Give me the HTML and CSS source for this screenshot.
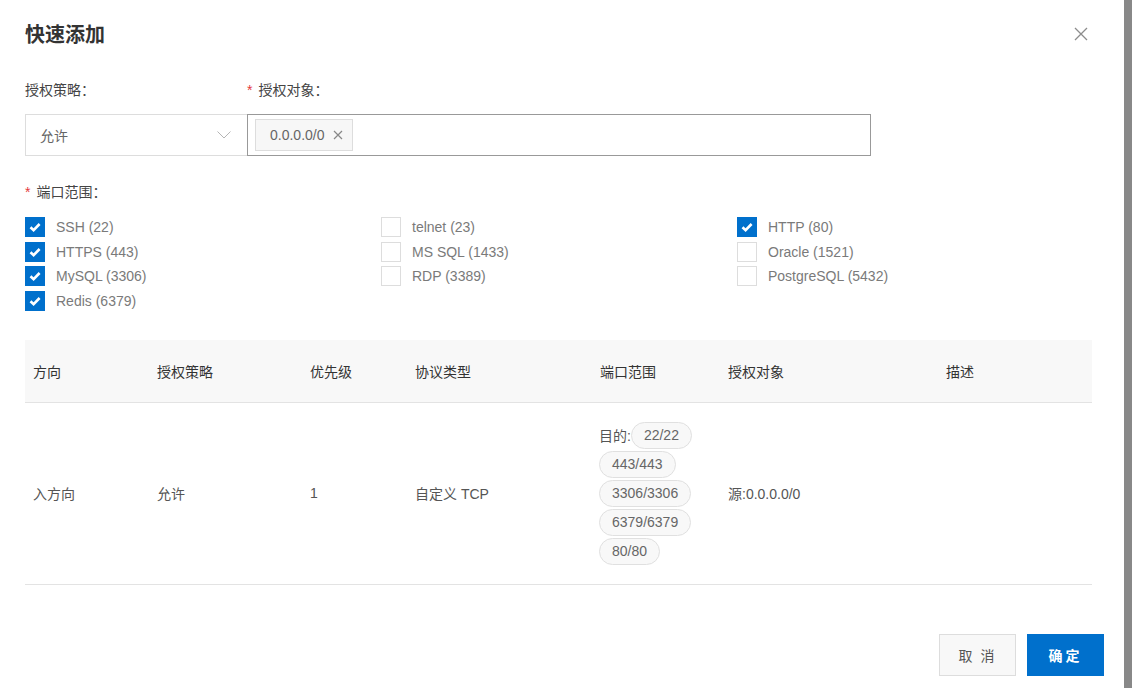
FILE: index.html
```html
<!DOCTYPE html>
<html lang="zh-CN">
<head>
    <meta charset="UTF-8">
    <title>快速添加</title>
    <link rel="stylesheet" href="styles.css">
</head>
<body>
    <div class="dialog">
        <div class="dialog-header">
            <h3>快速添加</h3>
            <span class="close">
                <svg width="14" height="14" viewBox="0 0 14 14"><path d="M1 1L13 13M13 1L1 13" stroke="#8c8c8c" stroke-width="1.3" fill="none"/></svg>
            </span>
        </div>

        <div class="form-row">
            <div class="field field-policy">
                <label>授权策略：</label>
                <div class="select">
                    <span>允许</span>
                    <svg width="14" height="8" viewBox="0 0 14 8"><path d="M0.5 0.5L7 7L13.5 0.5" stroke="#b5b5b5" stroke-width="1" fill="none"/></svg>
                </div>
            </div>
            <div class="field field-target">
                <label><i class="req">*</i>授权对象：</label>
                <div class="tag-input">
                    <span class="tag">0.0.0.0/0
                        <svg class="tag-x" width="10" height="10" viewBox="0 0 10 10"><path d="M1 1L9 9M9 1L1 9" stroke="#888" stroke-width="1.2" fill="none"/></svg>
                    </span>
                </div>
            </div>
        </div>

        <div class="ports">
            <label><i class="req">*</i>端口范围：</label>
            <div class="port-grid">
                <div class="port-col">
                    <div class="check on"><span class="box"></span>SSH (22)</div>
                    <div class="check on"><span class="box"></span>HTTPS (443)</div>
                    <div class="check on"><span class="box"></span>MySQL (3306)</div>
                    <div class="check on"><span class="box"></span>Redis (6379)</div>
                </div>
                <div class="port-col">
                    <div class="check"><span class="box"></span>telnet (23)</div>
                    <div class="check"><span class="box"></span>MS SQL (1433)</div>
                    <div class="check"><span class="box"></span>RDP (3389)</div>
                </div>
                <div class="port-col">
                    <div class="check on"><span class="box"></span>HTTP (80)</div>
                    <div class="check"><span class="box"></span>Oracle (1521)</div>
                    <div class="check"><span class="box"></span>PostgreSQL (5432)</div>
                </div>
            </div>
        </div>

        <table class="rules">
            <thead>
                <tr>
                    <th class="c1">方向</th>
                    <th class="c2">授权策略</th>
                    <th class="c3">优先级</th>
                    <th class="c4">协议类型</th>
                    <th class="c5">端口范围</th>
                    <th class="c6">授权对象</th>
                    <th>描述</th>
                </tr>
            </thead>
            <tbody>
                <tr>
                    <td>入方向</td>
                    <td>允许</td>
                    <td>1</td>
                    <td>自定义 TCP</td>
                    <td>
                        <div class="pills">
                            <span>目的:</span>
                            <span class="pill">22/22</span>
                            <span class="pill">443/443</span>
                            <span class="pill">3306/3306</span>
                            <span class="pill">6379/6379</span>
                            <span class="pill">80/80</span>
                        </div>
                    </td>
                    <td>源:0.0.0.0/0</td>
                    <td></td>
                </tr>
            </tbody>
        </table>

        <div class="dialog-footer">
            <button class="btn">取 消</button>
            <button class="btn btn-primary">确定</button>
        </div>
    </div>
    <div class="scrollbar"></div>
</body>
</html>
```

FILE: styles.css
```css
body {
    margin: 0;
    display: flex;
    height: 688px;
    overflow: hidden;
    font-family: "Liberation Sans", "Noto Sans CJK SC", sans-serif;
    font-size: 14px;
    color: #333;
    background: #fff;
}
.dialog {
    flex: 1;
    padding: 0 20px 0 25px;
}
.scrollbar {
    width: 8px;
    background: #888;
}
.dialog-header {
    display: flex;
    justify-content: space-between;
    align-items: center;
    padding-top: 19px;
    padding-right: 16px;
    height: 28px;
}
.dialog-header h3 {
    margin: 0;
    font-size: 20px;
    font-weight: bold;
    color: #333;
}
.close {
    display: flex;
    margin-top: 1px;
}
.req {
    font-style: normal;
    color: #e4393c;
    margin-right: 6px;
}
.form-row {
    display: flex;
    margin-top: 33px;
}
.field label,
.ports label {
    display: block;
    line-height: 20px;
    color: #444;
}
.field-policy {
    width: 222px;
}
.field-target {
    width: 624px;
}
.select {
    margin-top: 14px;
    height: 40px;
    border: 1px solid #ddd;
    border-right: none;
    display: flex;
    align-items: center;
    justify-content: space-between;
    padding: 0 16px 0 14px;
    color: #666;
}
.tag-input {
    margin-top: 14px;
    border: 1px solid #999;
    padding: 4px 7px;
    height: 32px;
}
.tag {
    display: inline-flex;
    align-items: center;
    height: 30px;
    padding: 0 9px 0 14px;
    background: #f7f7f7;
    border: 1px solid #ddd;
    color: #666;
}
.tag-x {
    margin-left: 8px;
}
.ports {
    margin-top: 26px;
}
.port-grid {
    display: flex;
    margin-top: 15px;
}
.port-col {
    width: 356px;
    display: flex;
    flex-direction: column;
    gap: 4.5px;
}
.check {
    display: flex;
    align-items: center;
    height: 20px;
    color: #7a7a7a;
}
.box {
    width: 18px;
    height: 18px;
    border: 1px solid #ddd;
    margin-right: 11px;
    background: #fff;
}
.check.on .box {
    border-color: #0070cc;
    background: #0070cc url("data:image/svg+xml,%3Csvg xmlns='http://www.w3.org/2000/svg' width='18' height='18' viewBox='0 0 18 18'%3E%3Cpath d='M4.5 9.2L7.6 12.2L13.6 6' stroke='white' stroke-width='2.6' fill='none'/%3E%3C/svg%3E") no-repeat center;
}
.rules {
    margin-top: 29px;
    width: 1067px;
    border-collapse: collapse;
    table-layout: fixed;
}
.rules th {
    background: #f8f8f8;
    height: 62px;
    padding: 0 8px;
    text-align: left;
    font-weight: normal;
    color: #333;
    border-bottom: 1px solid #e3e3e3;
}
.rules .c1 { width: 108px; }
.rules .c2 { width: 137px; }
.rules .c3 { width: 89px; }
.rules .c4 { width: 169px; }
.rules .c5 { width: 112px; }
.rules .c6 { width: 202px; }
.rules td {
    padding: 19px 7px 19px 8px;
    color: #555;
    border-bottom: 1px solid #e3e3e3;
    vertical-align: middle;
}
.pills {
    display: flex;
    flex-wrap: wrap;
    align-items: center;
    row-gap: 2px;
    margin-left: -1px;
}
.pill {
    display: inline-block;
    height: 25px;
    line-height: 25px;
    padding: 0 12px;
    border: 1px solid #e0e0e0;
    border-radius: 14px;
    background: #f8f8f8;
    color: #666;
}
.dialog-footer {
    display: flex;
    justify-content: flex-end;
    gap: 11px;
    margin-top: 49px;
}
.btn {
    width: 77px;
    height: 42px;
    border: 1px solid #ddd;
    background: #f8f8f8;
    color: #555;
    font-family: inherit;
    font-size: 14px;
    letter-spacing: 2px;
    cursor: pointer;
}
.btn-primary {
    background: #0070cc;
    border-color: #0070cc;
    color: #fff;
    font-weight: bold;
    letter-spacing: 3px;
}
```
